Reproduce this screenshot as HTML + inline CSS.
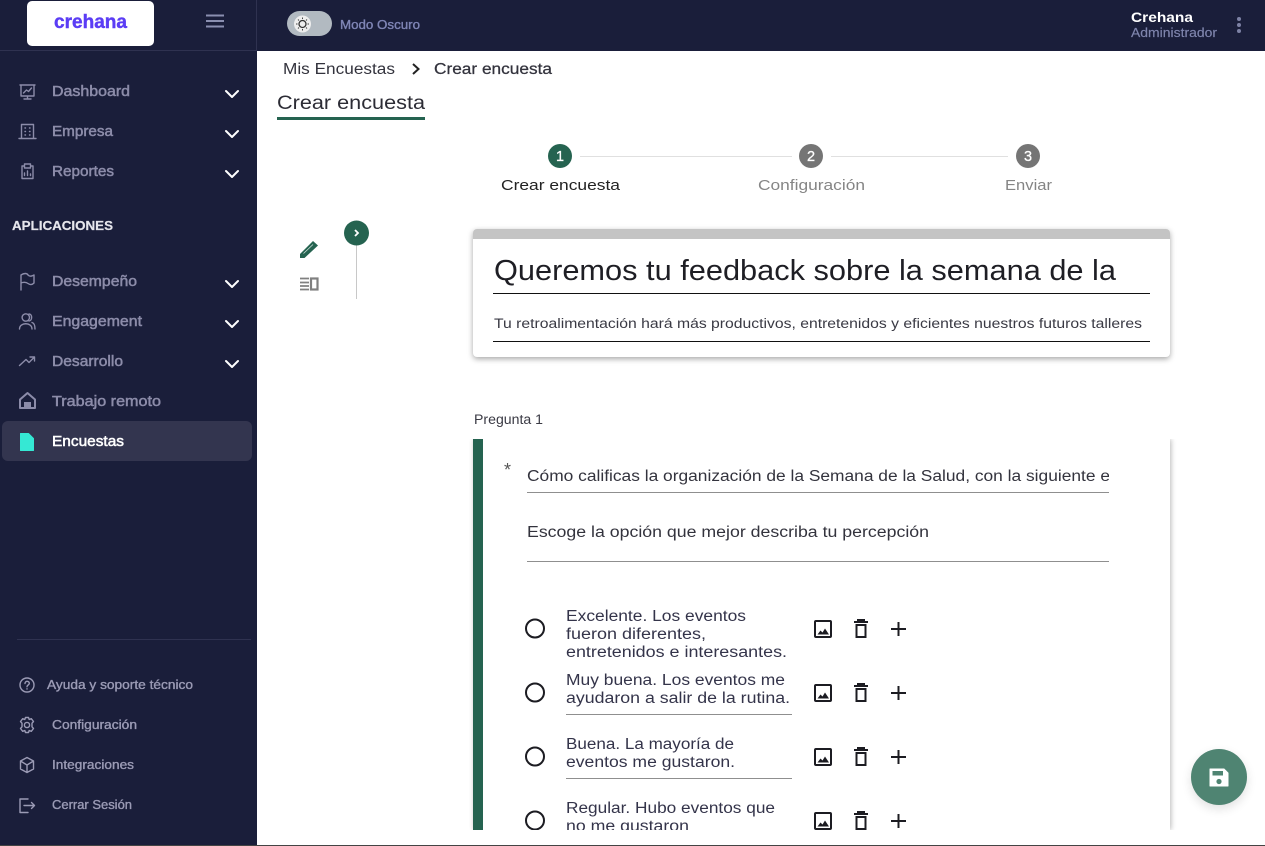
<!DOCTYPE html>
<html lang="es">
<head>
<meta charset="utf-8">
<title>Crear encuesta</title>
<style>
html,body{margin:0;padding:0;width:1265px;height:846px;overflow:hidden;background:#fff}
div{position:absolute;box-sizing:border-box}
svg{position:absolute;left:0;top:0}
text{font-family:"Liberation Sans",sans-serif;white-space:pre}
.n{font-size:14.5px;fill:#8c8ca9;stroke:#8c8ca9;stroke-width:.5}
.b{font-size:12.5px;fill:#9b9bb5;stroke:#9b9bb5;stroke-width:.35}
.m{font-size:15.5px;fill:#33333d}
.o{font-size:15.5px;fill:#34344a}
.i{fill:none;stroke:#8c8ca9;stroke-width:1.4;stroke-linecap:round;stroke-linejoin:round}
.ib{fill:none;stroke:#9b9bb5;stroke-width:1.4;stroke-linecap:round;stroke-linejoin:round}
.c{fill:none;stroke:#fff;stroke-width:2;stroke-linecap:round;stroke-linejoin:round}
.k{fill:none;stroke:#1c1c22;stroke-width:2}
</style>
</head>
<body>
<div style="left:0;top:0;width:257px;height:846px;background:#1a1e3a"></div>
<div style="left:0;top:0;width:1265px;height:51px;background:#1a1e3a"></div>
<div style="left:473px;top:229px;width:697px;height:128px;background:#fff;border-radius:4px;box-shadow:0 2px 6px rgba(0,0,0,.35)"></div>
<div style="left:473px;top:229px;width:697px;height:10px;background:#c4c4c4;border-radius:4px 4px 0 0"></div>
<div style="left:473px;top:439px;width:697px;height:391px;background:#fff;box-shadow:1px 0 5px rgba(0,0,0,.28);clip-path:inset(0 -8px 0 -4px)"></div>
<div style="left:473px;top:439px;width:10px;height:391px;background:#256350"></div>
<div style="left:2px;top:421px;width:250px;height:40px;background:#33354f;border-radius:6px"></div>
<div style="left:1191px;top:749px;width:56px;height:56px;border-radius:50%;background:#4f8472;box-shadow:0 4px 10px rgba(0,0,0,.12)"></div>
<div style="left:0;top:845px;width:1265px;height:1px;background:#444"></div>

<svg width="1265" height="846" viewBox="0 0 1265 846" xmlns="http://www.w3.org/2000/svg">
<defs>
<clipPath id="q"><rect x="520" y="460" width="589" height="30"/></clipPath>
<clipPath id="card"><rect x="473" y="439" width="697" height="391"/></clipPath>
</defs>

<!-- header -->
<rect x="0" y="50" width="257" height="1" fill="#2f3250"/>
<rect x="256" y="0" width="1" height="51" fill="#2f3250"/>
<rect x="27" y="1" width="127" height="45" rx="5" fill="#fff"/>
<text x="54" y="28" font-size="19" font-weight="700" fill="#5b3df5" stroke="#5b3df5" stroke-width=".4" textLength="73" lengthAdjust="spacingAndGlyphs">crehana</text>
<path d="M206 15.500H224M206 21H224M206 26.500H224" stroke="#8a8fb0" stroke-width="2"/>
<rect x="287" y="11" width="45" height="25" rx="12.500" fill="#b2bac1"/>
<circle cx="302.500" cy="24" r="8.500" fill="#eeeeee"/>
<circle cx="302.500" cy="24" r="3.500" fill="none" stroke="#333" stroke-width="1.300"/>
<path d="M302.500 17.500v1.500M302.500 29v1.500M296 24h1.500M307.500 24h1.500M298 19.500l1 1M306 27.500l1 1M298 28.500l1-1M306 20.500l1-1" stroke="#444" stroke-width="1"/>
<text x="340" y="29" font-size="12.500" fill="#7f85b5" stroke="#7f85b5" stroke-width=".35" textLength="80" lengthAdjust="spacingAndGlyphs">Modo Oscuro</text>
<text x="1131" y="22" font-size="14" font-weight="700" fill="#fff" textLength="62" lengthAdjust="spacingAndGlyphs">Crehana</text>
<text x="1131" y="37" font-size="12.500" fill="#7f85ad" stroke="#7f85ad" stroke-width=".15" textLength="86" lengthAdjust="spacingAndGlyphs">Administrador</text>
<g fill="#7d82a5"><circle cx="1239" cy="19" r="2"/><circle cx="1239" cy="25" r="2"/><circle cx="1239" cy="31" r="2"/></g>

<!-- nav -->
<text class="n" x="52" y="96" textLength="78" lengthAdjust="spacingAndGlyphs">Dashboard</text>
<text class="n" x="52" y="136" textLength="61" lengthAdjust="spacingAndGlyphs">Empresa</text>
<text class="n" x="52" y="176" textLength="62" lengthAdjust="spacingAndGlyphs">Reportes</text>
<text x="12" y="230" font-size="12.500" font-weight="700" fill="#e6e6ec" stroke="#e6e6ec" stroke-width=".2" textLength="101" lengthAdjust="spacingAndGlyphs">APLICACIONES</text>
<text class="n" x="52" y="286" textLength="85" lengthAdjust="spacingAndGlyphs">Desempeño</text>
<text class="n" x="52" y="326" textLength="90" lengthAdjust="spacingAndGlyphs">Engagement</text>
<text class="n" x="52" y="366" textLength="71" lengthAdjust="spacingAndGlyphs">Desarrollo</text>
<text class="n" x="52" y="406" textLength="109" lengthAdjust="spacingAndGlyphs">Trabajo remoto</text>
<text class="n" x="52" y="446" style="fill:#fff;stroke:#fff" textLength="72" lengthAdjust="spacingAndGlyphs">Encuestas</text>
<path class="c" d="M226 91l6 6 6-6M226 131l6 6 6-6M226 171l6 6 6-6M226 281l6 6 6-6M226 321l6 6 6-6M226 361l6 6 6-6"/>

<!-- nav icons -->
<g class="i">
<path d="M20 85H35M21 85V96H34V85M27.500 96V99M24 99H31M23.500 93l3-3 2 1.500 3-3.500"/>
<path d="M21.500 124.500H33.500V138.500H21.500ZM19 138.500H36M25 128h.5M29.500 128h.5M25 131.500h.5M29.500 131.500h.5M25 135h.5M29.500 135h.5"/>
<path d="M24 166H22V178.500H33V166H31M24.500 164H30.500V168H24.500ZM24.500 175.500V173M27.500 175.500V171M30.500 175.500V174"/>
<path d="M21 290V275C24 273 27 273 28 275C30 277 32 276 34 275V283C32 285 30 285 28 283.500C26 282 23 282 21 283"/>
<path d="M19.500 329C19.500 322 32 322 32 329M35 329C35 325 34 323 32 322.500M29.500 317.500a3.700 3.700 0 1 1-7.400 0 3.700 3.700 0 1 1 7.400 0M29 314C32.500 314 32.500 320.500 29 321"/>
<path d="M19.500 365.500L26 359.500L29 362.500L34.500 357M30 357H34.500V361"/>
</g>
<path d="M27.500 393L35 399.500V408H20V399.500Z" fill="none" stroke="#8c8ca9" stroke-width="2" stroke-linejoin="round"/>
<rect x="24" y="402" width="7" height="6" fill="#8c8ca9"/>
<path d="M20.500 433.500H28.500L33.500 438.500V450.500H20.500Z" fill="#35e8d4" stroke="#35e8d4" stroke-linejoin="round"/>

<!-- bottom nav -->
<rect x="17" y="639" width="234" height="1" fill="#2f3250"/>
<text class="b" x="47" y="689" textLength="146" lengthAdjust="spacingAndGlyphs">Ayuda y soporte técnico</text>
<text class="b" x="52" y="729" textLength="85" lengthAdjust="spacingAndGlyphs">Configuración</text>
<text class="b" x="52" y="769" textLength="82" lengthAdjust="spacingAndGlyphs">Integraciones</text>
<text class="b" x="52" y="809" textLength="80" lengthAdjust="spacingAndGlyphs">Cerrar Sesión</text>
<g class="ib">
<circle cx="27" cy="685" r="7"/>
<path d="M25 683.500C25 680.500 29.500 680.800 29.300 683.500C29.200 685 27 685 27 686.800M27 688.800v.2"/>
<circle cx="27" cy="725" r="2.600"/>
<path d="M25.500 717.500H28.500L29.200 719.500L31.300 718.700L33.500 721.500L32 723.200V726.800L33.500 728.500L31.300 731.300L29.200 730.500L28.500 732.500H25.500L24.800 730.500L22.700 731.300L20.500 728.500L22 726.800V723.200L20.500 721.500L22.700 718.700L24.800 719.500Z"/>
<path d="M27 757.500L33.500 761V769L27 772.500L20.500 769V761ZM20.500 761L27 765L33.500 761M27 765V772.500"/>
<path d="M28 799H20V812.500H28M24 805.500H34.500M31.500 802.500L34.500 805.500L31.500 808.500"/>
</g>

<!-- breadcrumb -->
<text class="m" x="283" y="74" textLength="112" lengthAdjust="spacingAndGlyphs">Mis Encuestas</text>
<path d="M413 64l5.500 5-5.500 5" fill="none" stroke="#222" stroke-width="2"/>
<text class="m" x="434" y="74" style="stroke:#33333d;stroke-width:.25" textLength="118" lengthAdjust="spacingAndGlyphs">Crear encuesta</text>
<text x="277" y="109" font-size="19" fill="#2c2c35" textLength="148" lengthAdjust="spacingAndGlyphs">Crear encuesta</text>
<rect x="277" y="117" width="148" height="3" fill="#256350"/>

<!-- stepper -->
<path d="M580 156.500H792M831 156.500H1008" stroke="#e0e0e0"/>
<circle cx="560" cy="156" r="12" fill="#256350"/>
<circle cx="811" cy="156" r="12" fill="#757575"/>
<circle cx="1028" cy="156" r="12" fill="#757575"/>
<g font-size="14.500" fill="#fff" stroke="#fff" stroke-width=".3" text-anchor="middle"><text x="560" y="161">1</text><text x="811" y="161">2</text><text x="1028" y="161">3</text></g>
<text x="501" y="190" font-size="15" fill="#222" textLength="119" lengthAdjust="spacingAndGlyphs">Crear encuesta</text>
<text x="758" y="190" font-size="15" fill="#858585" textLength="107" lengthAdjust="spacingAndGlyphs">Configuración</text>
<text x="1005" y="190" font-size="15" fill="#858585" textLength="47" lengthAdjust="spacingAndGlyphs">Enviar</text>

<!-- side tools -->
<rect x="356" y="245" width="1" height="54" fill="#c8c8c8"/>
<circle cx="356.500" cy="233" r="12.500" fill="#256350"/>
<path d="M355 230l3 3-3 3" fill="none" stroke="#fff" stroke-width="1.800"/>
<path d="M300 258V254L313 241L318 245.500L304.500 258Z" fill="#256350"/>
<path d="M303.500 253.500L313 244.500" stroke="#cfe0da" stroke-width=".8"/>
<path d="M300 278.500H309M300 282.500H309M300 286H309M300 289.500H309" stroke="#808080" stroke-width="1.800"/>
<rect x="311" y="278.500" width="6.500" height="11" fill="none" stroke="#808080" stroke-width="2.200"/>

<!-- card 1 -->
<text x="494" y="280" font-size="29" fill="#1e1e24" textLength="622" lengthAdjust="spacingAndGlyphs">Queremos tu feedback sobre la semana de la</text>
<rect x="493" y="293" width="657" height="1" fill="#111"/>
<text x="494" y="328" font-size="13.500" fill="#3a3a44" textLength="648" lengthAdjust="spacingAndGlyphs">Tu retroalimentación hará más productivos, entretenidos y eficientes nuestros futuros talleres</text>
<rect x="493" y="341" width="657" height="1" fill="#111"/>

<!-- question -->
<text x="474" y="424" font-size="13.500" fill="#3a3a44" textLength="69" lengthAdjust="spacingAndGlyphs">Pregunta 1</text>
<text x="504" y="476" font-size="18" fill="#555">*</text>
<text class="m" x="527" y="481" clip-path="url(#q)" textLength="583" lengthAdjust="spacingAndGlyphs">Cómo calificas la organización de la Semana de la Salud, con la siguiente e</text>
<rect x="527" y="492" width="582" height="1" fill="#8f8f8f"/>
<text class="m" x="527" y="537" textLength="402" lengthAdjust="spacingAndGlyphs">Escoge la opción que mejor describa tu percepción</text>
<rect x="527" y="561" width="582" height="1" fill="#8f8f8f"/>

<!-- options -->
<g clip-path="url(#card)">
<text class="o" x="566" y="621" textLength="180" lengthAdjust="spacingAndGlyphs">Excelente. Los eventos</text>
<text class="o" x="566" y="639" textLength="140" lengthAdjust="spacingAndGlyphs">fueron diferentes,</text>
<text class="o" x="566" y="657" textLength="221" lengthAdjust="spacingAndGlyphs">entretenidos e interesantes.</text>
<text class="o" x="566" y="685" textLength="219" lengthAdjust="spacingAndGlyphs">Muy buena. Los eventos me</text>
<text class="o" x="566" y="703" textLength="224" lengthAdjust="spacingAndGlyphs">ayudaron a salir de la rutina.</text>
<rect x="566" y="714" width="226" height="1" fill="#8f8f8f"/>
<text class="o" x="566" y="749" textLength="168" lengthAdjust="spacingAndGlyphs">Buena. La mayoría de</text>
<text class="o" x="566" y="767" textLength="169" lengthAdjust="spacingAndGlyphs">eventos me gustaron.</text>
<rect x="566" y="778" width="226" height="1" fill="#8f8f8f"/>
<text class="o" x="566" y="813" textLength="209" lengthAdjust="spacingAndGlyphs">Regular. Hubo eventos que</text>
<text class="o" x="566" y="831" textLength="123" lengthAdjust="spacingAndGlyphs">no me gustaron</text>

<g>
<circle class="k" cx="535" cy="628.500" r="9"/>
<rect class="k" x="815" y="621" width="16" height="16" rx="1"/>
<path d="M817.500 634.500L820.500 630.500L822.500 632.500L825 628.500L829 634.500Z" fill="#1c1c22"/>
<path d="M854 622H868M858 621V620H864V621" fill="none" stroke="#1c1c22" stroke-width="2"/>
<rect class="k" x="856.500" y="625" width="9" height="12"/>
<path d="M891 629H906M898.500 622V636" stroke="#1c1c22" stroke-width="2"/>
</g>
<g transform="translate(0 64)">
<circle class="k" cx="535" cy="628.500" r="9"/>
<rect class="k" x="815" y="621" width="16" height="16" rx="1"/>
<path d="M817.500 634.500L820.500 630.500L822.500 632.500L825 628.500L829 634.500Z" fill="#1c1c22"/>
<path d="M854 622H868M858 621V620H864V621" fill="none" stroke="#1c1c22" stroke-width="2"/>
<rect class="k" x="856.500" y="625" width="9" height="12"/>
<path d="M891 629H906M898.500 622V636" stroke="#1c1c22" stroke-width="2"/>
</g>
<g transform="translate(0 128)">
<circle class="k" cx="535" cy="628.500" r="9"/>
<rect class="k" x="815" y="621" width="16" height="16" rx="1"/>
<path d="M817.500 634.500L820.500 630.500L822.500 632.500L825 628.500L829 634.500Z" fill="#1c1c22"/>
<path d="M854 622H868M858 621V620H864V621" fill="none" stroke="#1c1c22" stroke-width="2"/>
<rect class="k" x="856.500" y="625" width="9" height="12"/>
<path d="M891 629H906M898.500 622V636" stroke="#1c1c22" stroke-width="2"/>
</g>
<g transform="translate(0 192)">
<circle class="k" cx="535" cy="628.500" r="9"/>
<rect class="k" x="815" y="621" width="16" height="16" rx="1"/>
<path d="M817.500 634.500L820.500 630.500L822.500 632.500L825 628.500L829 634.500Z" fill="#1c1c22"/>
<path d="M854 622H868M858 621V620H864V621" fill="none" stroke="#1c1c22" stroke-width="2"/>
<rect class="k" x="856.500" y="625" width="9" height="12"/>
<path d="M891 629H906M898.500 622V636" stroke="#1c1c22" stroke-width="2"/>
</g>
</g>

<!-- FAB icon -->
<path d="M1210 769H1224L1228 773V786H1210Z" fill="#fff" stroke="#fff" stroke-linejoin="round"/>
<rect x="1212.500" y="771" width="10.500" height="4.500" fill="#4f8472"/>
<circle cx="1219" cy="781.500" r="2.600" fill="#4f8472"/>
</svg>
</body>
</html>
